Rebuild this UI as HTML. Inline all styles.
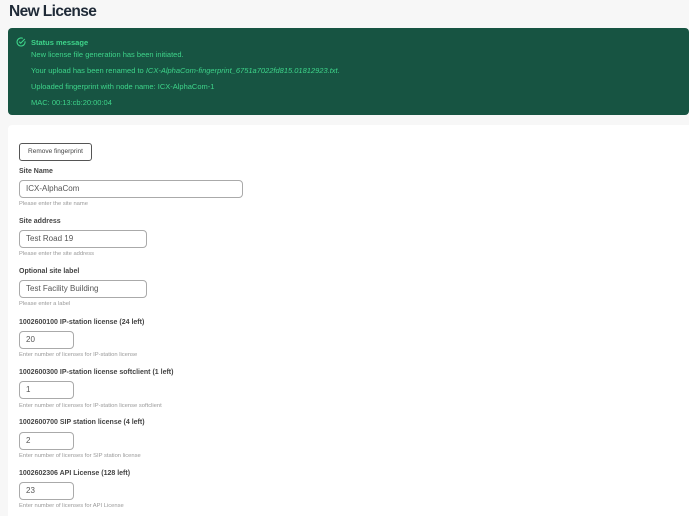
<!DOCTYPE html>
<html><head><style>
body{margin:0;width:700px;height:516px;overflow:hidden;background:#fff;font-family:"Liberation Sans",sans-serif;}
.page{position:absolute;left:0;top:0;width:689px;height:516px;background:#f7f7f7;}
h1{position:absolute;left:9px;top:3px;margin:0;font-size:15.5px;letter-spacing:-0.6px;font-weight:bold;color:#1f2a37;}
.msg{position:absolute;left:8px;top:28px;width:681px;height:87px;background:#175442;border-radius:4px;color:#3ed48a;font-size:7.5px;}
.msg div{position:absolute;left:23px;white-space:nowrap}
.card{position:absolute;left:8px;top:125px;width:692px;height:400px;background:#fff;border-radius:4px 0 0 0;}
.a{position:absolute;font-size:7px;color:#444;font-weight:bold;white-space:nowrap}
.h{position:absolute;font-size:5.8px;color:#999;white-space:nowrap}
.i{position:absolute;left:19px;border:1px solid #aaa;border-radius:4px;font-size:8px;color:#555;box-sizing:border-box;height:18px;line-height:16px;padding-left:6px;background:#fff}
.btn{position:absolute;left:19px;top:143px;width:73px;height:18px;border:1px solid #555;border-radius:3px;box-sizing:border-box;font-size:6.5px;color:#444;text-align:center;line-height:16px}
</style></head><body><div class="page">
<h1>New License</h1>
<div class="msg">
<svg style="position:absolute;left:8px;top:9px" width="10" height="10" viewBox="0 0 10 10"><path d="M9 4.3A4 4 0 1 1 6.8 1.4" fill="none" stroke="#3ed48a" stroke-width="1.1"/><path d="M3.2 4.7 4.7 6.2 8.8 2" fill="none" stroke="#3ed48a" stroke-width="1.1"/></svg>
<div style="top:10px;font-weight:bold">Status message</div>
<div style="top:22px">New license file generation has been initiated.</div>
<div style="top:38px">Your upload has been renamed to <i>ICX-AlphaCom-fingerprint_6751a7022fd815.01812923.txt</i>.</div>
<div style="top:54px">Uploaded fingerprint with node name: ICX-AlphaCom-1</div>
<div style="top:70px">MAC: 00:13:cb:20:00:04</div>
</div>
</div>
<div class="card"></div>
<div class="btn">Remove fingerprint</div>
<div class="a" style="left:19px;top:168px">Site Name</div>
<div class="i" style="top:180px;width:224px">ICX-AlphaCom</div>
<div class="h" style="left:19px;top:201px">Please enter the site name</div>
<div class="a" style="left:19px;top:218px">Site address</div>
<div class="i" style="top:230px;width:128px">Test Road 19</div>
<div class="h" style="left:19px;top:251px">Please enter the site address</div>
<div class="a" style="left:19px;top:268px">Optional site label</div>
<div class="i" style="top:280px;width:128px">Test Facility Building</div>
<div class="h" style="left:19px;top:301px">Please enter a label</div>
<div class="a" style="left:19px;top:319px">1002600100 IP-station license (24 left)</div>
<div class="i" style="top:331px;width:55px">20</div>
<div class="h" style="left:19px;top:352px">Enter number of licenses for IP-station license</div>
<div class="a" style="left:19px;top:369px">1002600300 IP-station license softclient (1 left)</div>
<div class="i" style="top:381px;width:55px">1</div>
<div class="h" style="left:19px;top:403px">Enter number of licenses for IP-station license softclient</div>
<div class="a" style="left:19px;top:419px">1002600700 SIP station license (4 left)</div>
<div class="i" style="top:432px;width:55px">2</div>
<div class="h" style="left:19px;top:453px">Enter number of licenses for SIP station license</div>
<div class="a" style="left:19px;top:470px">1002602306 API License (128 left)</div>
<div class="i" style="top:482px;width:55px">23</div>
<div class="h" style="left:19px;top:503px">Enter number of licenses for API License</div>
</body></html>
